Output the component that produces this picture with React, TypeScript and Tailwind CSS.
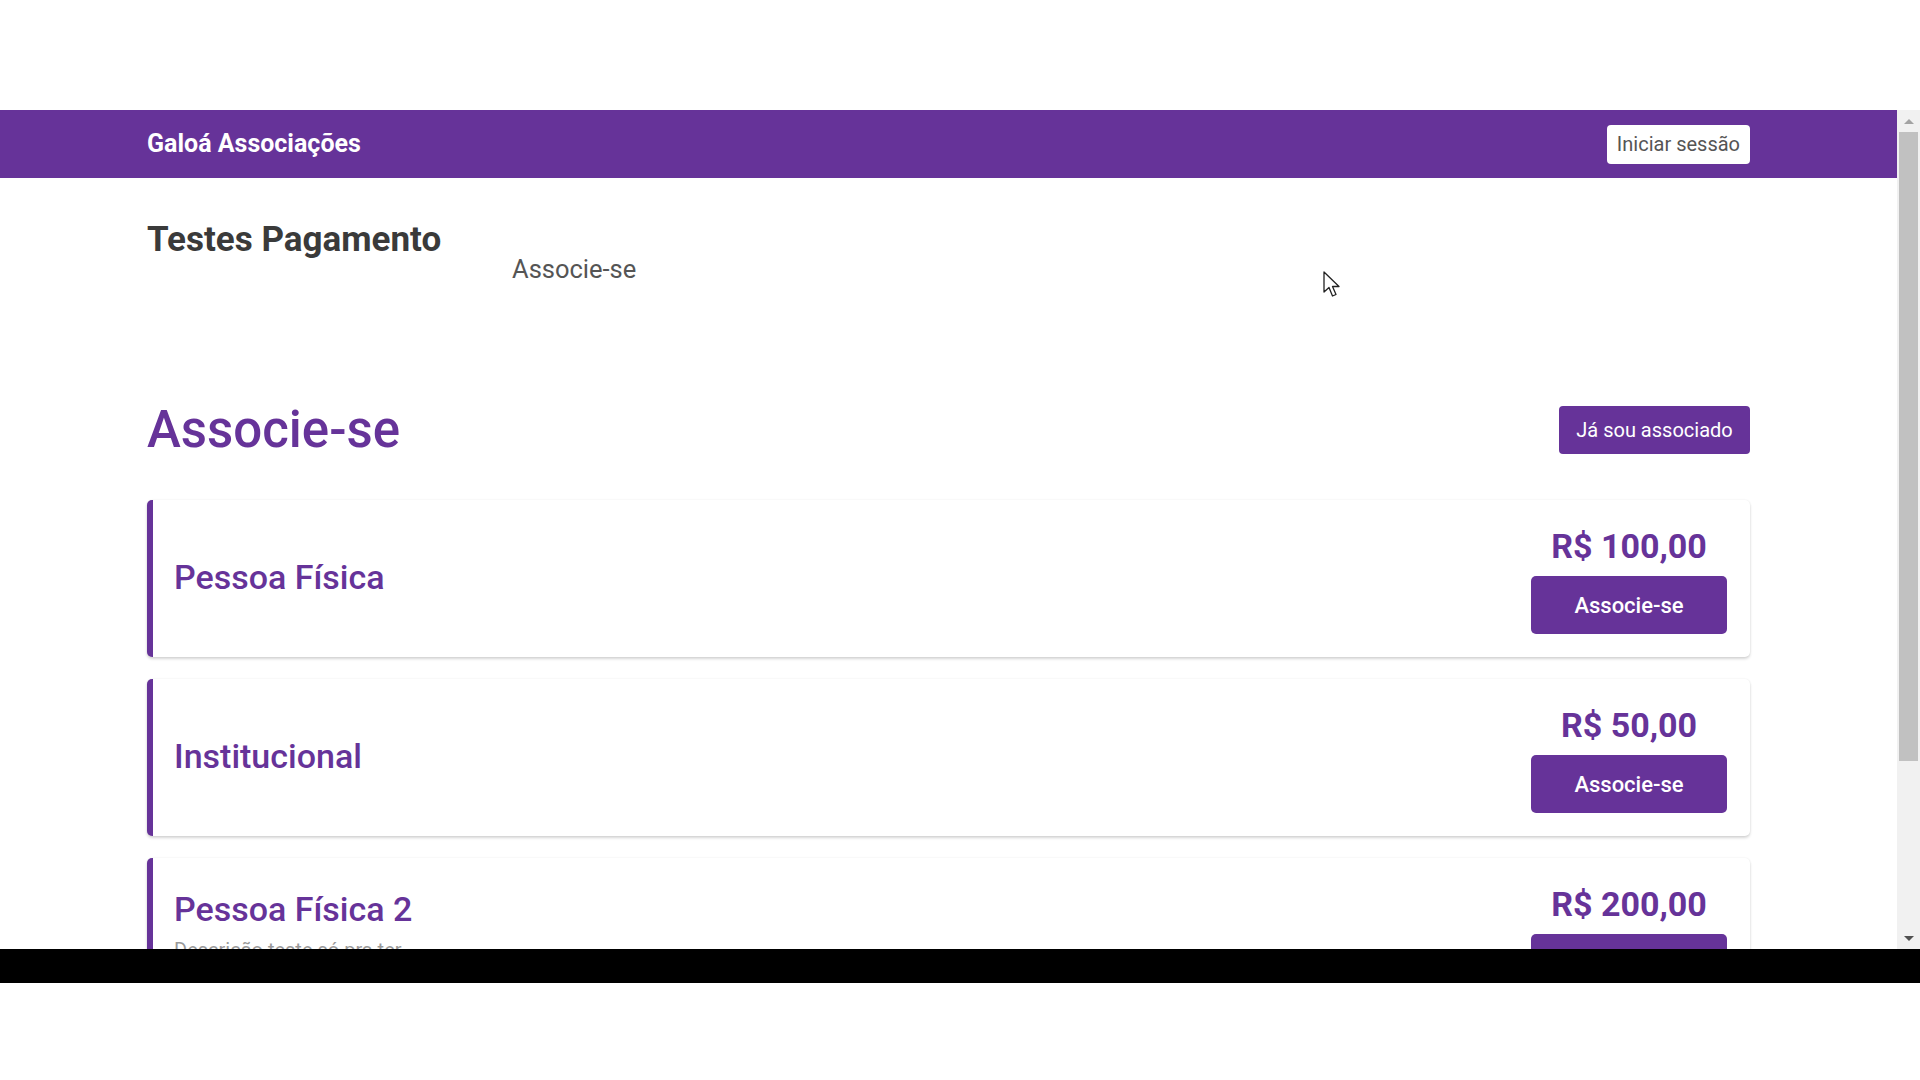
const plans = [
  { name: "Pessoa Física", price: "R$ 100,00" },
  { name: "Institucional", price: "R$ 50,00" },
  {
    name: "Pessoa Física 2",
    price: "R$ 200,00",
    description: "Descrição teste só pra ter",
  },
];

function Cursor() {
  return (
    <svg
      className="absolute left-[1323px] top-[271px]"
      width="20"
      height="28"
      viewBox="0 0 20 28"
    >
      <path
        d="M1 1 L1 21 L6 16.5 L9.5 25 L13 23.5 L9.5 15.5 L16 15.5 Z"
        fill="#fff"
        stroke="#222"
        strokeWidth="1.3"
        strokeLinejoin="round"
      />
    </svg>
  );
}

function Scrollbar() {
  return (
    <div className="w-[23px] h-full bg-[#f1f1f1] flex flex-col">
      <div className="h-[22px] flex items-center justify-center">
        <div className="w-0 h-0 border-l-[5px] border-r-[5px] border-b-[5px] border-l-transparent border-r-transparent border-b-[#a3a3a3]" />
      </div>
      <div className="h-[629px] mx-[2px] bg-[#c1c1c1]" />
      <div className="flex-1" />
      <div className="h-[22px] flex items-center justify-center">
        <div className="w-0 h-0 border-l-[5px] border-r-[5px] border-t-[5px] border-l-transparent border-r-transparent border-t-[#505050]" />
      </div>
    </div>
  );
}

export default function App() {
  return (
    <div className="relative w-[1920px] h-[1080px] bg-white overflow-hidden font-['Roboto',sans-serif]">
      <div className="h-[110px]" />

      <div className="h-[839px] flex">
        <div className="flex-1 overflow-hidden bg-white">
          {/* Top bar */}
          <header className="h-[68px] bg-[#663399] px-[147px] flex items-center justify-between">
            <span className="text-white text-[25px] font-bold">Galoá Associações</span>
            <button className="h-[39px] px-[10px] bg-white rounded-[4px] text-[20px] text-[#555]">
              Iniciar sessão
            </button>
          </header>

          <main className="px-[147px]">
            {/* Association title + nav */}
            <div className="pt-[42px] flex items-start">
              <h1 className="w-[365px] text-[35px] leading-[40px] font-bold text-[#3a3a3a]">
                Testes Pagamento
              </h1>
              <a className="mt-[35px] text-[25.5px] leading-[28px] text-[#555]">Associe-se</a>
            </div>

            <div className="mt-[123px] h-[48px] flex items-center justify-between">
              <h2 className="text-[51px] leading-[56px] font-medium text-[#663399]">
                Associe-se
              </h2>
              <button className="h-[48px] w-[191px] bg-[#663399] rounded-[4px] text-white text-[20px]">
                Já sou associado
              </button>
            </div>

            {/* Plans */}
            <div className="mt-[46px] flex flex-col gap-[22px]">
              {plans.map((plan) => (
                <div
                  key={plan.name}
                  className="min-h-[157px] bg-white rounded-[5px] border-l-[6px] border-[#663399] shadow-[0_2px_3px_rgba(0,0,0,0.16),0_0_2px_rgba(0,0,0,0.08)] pl-[21px] pr-[23px] flex justify-between items-start"
                >
                  <div className={plan.description ? "pt-[31px]" : "self-center mb-[3px]"}>
                    <h3 className="text-[34px] leading-[40px] font-medium text-[#663399]">
                      {plan.name}
                    </h3>
                    {plan.description && (
                      <p className="mt-[6px] text-[20px] leading-[30px] text-[#999]">
                        {plan.description}
                      </p>
                    )}
                  </div>
                  <div className="pt-[26px] pb-[23px] flex flex-col items-center">
                    <span className="text-[34px] leading-[41px] font-bold text-[#663399]">
                      {plan.price}
                    </span>
                    <button className="mt-[9px] w-[196px] h-[58px] bg-[#663399] rounded-[5px] text-white text-[22px] font-medium">
                      Associe-se
                    </button>
                  </div>
                </div>
              ))}
            </div>
          </main>
        </div>
        <Scrollbar />
      </div>

      <div className="h-[34px] bg-black" />

      <Cursor />
    </div>
  );
}
